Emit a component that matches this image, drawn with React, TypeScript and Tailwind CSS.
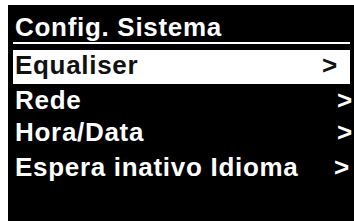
import React from "react";

const font = { fontFamily: '"Liberation Sans", Arial, sans-serif' };

export default function App() {
  return (
    <div
      className="w-[354px] h-[221px] bg-white pl-[8px] pt-[5px] overflow-hidden"
      style={font}
    >
      <div className="h-[216px] w-[346px] bg-black pl-[5px] pr-[4px] pt-[8px] font-bold text-[26px] tracking-[0.7px] overflow-hidden">
        <div className="h-[31px] leading-[29px] border-b-2 border-white text-white pl-[2px]">
          Config. Sistema
        </div>
        <div className="mt-[6px] h-[34px] bg-white text-[#111] flex justify-between leading-[29px] pt-[1px] pl-[2px]">
          <span>Equaliser</span>
          <span className="mr-[12px]">&gt;</span>
        </div>
        <div className="h-[32px] text-white flex justify-between leading-[29px] pt-[2px] pl-[2px]">
          <span>Rede</span>
          <span className="-mr-[3px]">&gt;</span>
        </div>
        <div className="h-[34px] text-white flex justify-between leading-[29px] pt-[2px] pl-[2px]">
          <span>Hora/Data</span>
          <span className="-mr-[3px]">&gt;</span>
        </div>
        <div className="h-[34px] text-white flex justify-between leading-[29px] pt-[3px] pl-[2px]">
          <span>Espera inativo Idioma</span>
          <span className="mr-[0px]">&gt;</span>
        </div>
      </div>
    </div>
  );
}
